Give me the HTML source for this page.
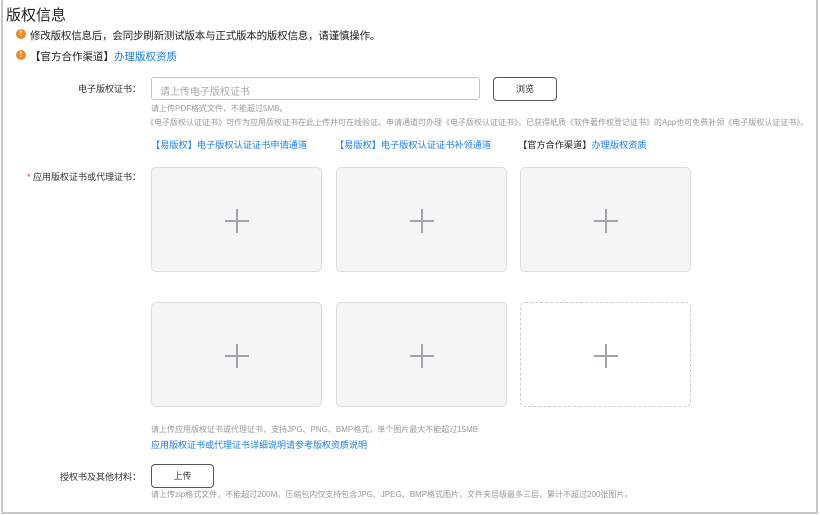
<!DOCTYPE html>
<html><head><meta charset="utf-8"><style>
*{margin:0;padding:0;box-sizing:border-box}
body{width:820px;height:515px;background:#fff;font-family:"Liberation Sans","Noto Sans CJK SC",sans-serif;position:relative;overflow:hidden;color:#333}
.frame{position:absolute;left:1px;top:-2px;width:817px;height:516px;border:2px solid #c8c8c8}
.a{position:absolute;white-space:nowrap}
.ic{position:absolute;width:10px;height:10px;border-radius:50%;background:#f08c1e;color:#fff;font-size:8px;line-height:10px;text-align:center;font-weight:bold}
.blue{color:#1a7ff0}
.lbl{font-size:9px;color:#333;text-align:right;width:141px}
.hint{font-size:8px;color:#999}
.box{position:absolute;width:171px;height:105px;border:1px solid #ddd;border-radius:5px;background:#f5f5f5}
.box.d{background:#fff;border:1px dashed #ccc}
.box:before{content:"";position:absolute;left:73px;top:52px;width:24px;height:2px;background:#a0a3aa}
.box:after{content:"";position:absolute;left:84px;top:41px;width:2px;height:24px;background:#a0a3aa}
.btn{position:absolute;border:1px solid #555;border-radius:4px;background:#fff;font-size:9px;text-align:center;color:#333}
</style></head><body>
<div class="frame"></div>
<div class="a" style="left:6px;top:4px;font-size:15px;color:#222">版权信息</div>
<div class="ic" style="left:16px;top:29px">!</div>
<div class="a" style="left:30px;top:28px;font-size:10.5px;color:#222;letter-spacing:-0.2px">修改版权信息后，会同步刷新测试版本与正式版本的版权信息，请谨慎操作。</div>
<div class="ic" style="left:16px;top:50px">!</div>
<div class="a" style="left:30px;top:49px;font-size:10.5px;color:#222">【官方合作渠道】<span class="blue">办理版权资质</span></div>
<div class="a lbl" style="left:0;top:82px">电子版权证书：</div>
<div class="a" style="left:151px;top:77px;width:329px;height:23px;border:1px solid #9ccbf5;border-radius:3px;font-size:10px;color:#aaa;padding:5px 8px">请上传电子版权证书</div>
<div class="btn" style="left:493px;top:77px;width:64px;height:24px;line-height:22px">浏览</div>
<div class="a hint" style="left:151px;top:103px">请上传PDF格式文件，不能超过5MB。</div>
<div class="a hint" style="left:146px;top:117px">《电子版权认证证书》可作为应用版权证书在此上传并可在线验证。申请通道可办理《电子版权认证证书》，已获得纸质《软件著作权登记证书》的App也可免费补领《电子版权认证证书》。</div>
<div class="a blue" style="left:151px;top:137px;font-size:9.2px">【易版权】电子版权认证证书申请通道</div>
<div class="a blue" style="left:335px;top:137px;font-size:9.2px">【易版权】电子版权认证证书补领通道</div>
<div class="a" style="left:518px;top:137px;font-size:9.2px;color:#222">【官方合作渠道】<span class="blue">办理版权资质</span></div>
<div class="a lbl" style="left:0;top:170px"><span style="color:#e33">*</span> 应用版权证书或代理证书：</div>
<div class="box" style="left:151px;top:167px"></div>
<div class="box" style="left:336px;top:167px"></div>
<div class="box" style="left:520px;top:167px"></div>
<div class="box" style="left:151px;top:302px"></div>
<div class="box" style="left:336px;top:302px"></div>
<div class="box d" style="left:520px;top:302px"></div>
<div class="a hint" style="left:151px;top:424px">请上传应用版权证书或代理证书，支持JPG、PNG、BMP格式，单个图片最大不能超过15MB</div>
<div class="a blue" style="left:151px;top:438px;font-size:9px">应用版权证书或代理证书详细说明请参考版权资质说明</div>
<div class="a lbl" style="left:0;top:470px">授权书及其他材料：</div>
<div class="btn" style="left:151px;top:464px;width:63px;height:24px;line-height:22px">上传</div>
<div class="a hint" style="left:151px;top:489px">请上传zip格式文件，不能超过200M。压缩包内仅支持包含JPG、JPEG、BMP格式图片，文件夹层级最多三层，累计不超过200张图片。</div>
</body></html>
